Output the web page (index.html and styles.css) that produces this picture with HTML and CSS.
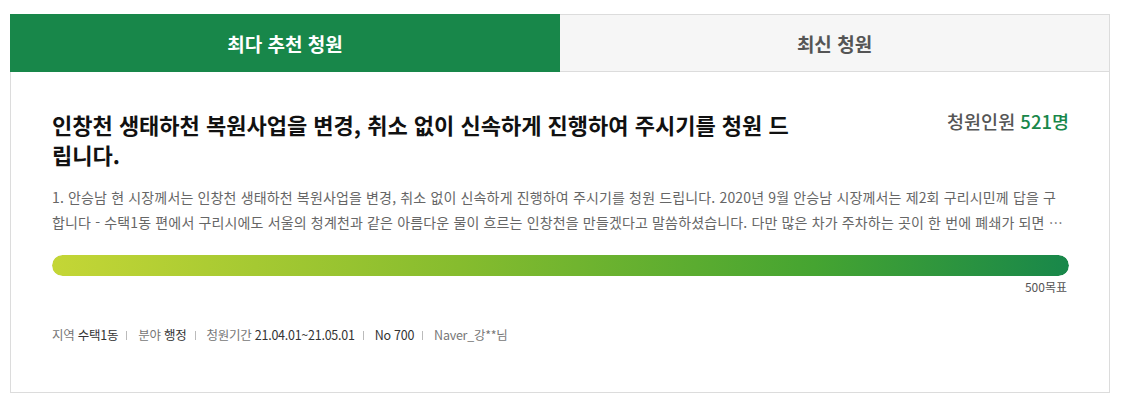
FILE: index.html
```html
<!DOCTYPE html>
<html lang="ko">
<head>
<meta charset="utf-8">
<link rel="stylesheet" href="styles.css">
</head>
<body>
<div class="board">
  <div class="tabs">
    <div class="tab active">최다 추천 청원</div>
    <div class="tab">최신 청원</div>
  </div>
  <div class="item">
    <div class="head">
      <h2 class="title">인창천 생태하천 복원사업을 변경, 취소 없이 신속하게 진행하여 주시기를 청원 드립니다.</h2>
      <div class="count">청원인원 <span class="num">521명</span></div>
    </div>
    <p class="desc">1. 안승남 현 시장께서는 인창천 생태하천 복원사업을 변경, 취소 없이 신속하게 진행하여 주시기를 청원 드립니다. 2020년 9월 안승남 시장께서는 제2회 구리시민께 답을 구합니다 - 수택1동 편에서 구리시에도 서울의 청계천과 같은 아름다운 물이 흐르는 인창천을 만들겠다고 말씀하셨습니다. 다만 많은 차가 주차하는 곳이 한 번에 폐쇄가 되면 주차 문제가 심각해질 수 있어 단계적으로 진행하겠다고 하셨습니다.</p>
    <div class="progress"><div class="bar" style="width:100%"></div></div>
    <div class="goal">500목표</div>
    <ul class="meta">
      <li><span class="lbl">지역</span> 수택1동</li>
      <li><span class="lbl">분야</span> 행정</li>
      <li><span class="lbl">청원기간</span> 21.04.01~21.05.01</li>
      <li>No 700</li>
      <li class="lbl">Naver_강**님</li>
    </ul>
  </div>
</div>
</body>
</html>
```
FILE: styles.css
```css
* { box-sizing: border-box; }
body {
  margin: 0;
  padding: 14px 0 0 10px;
  background: #fff;
  font-family: "Noto Sans CJK KR", "Noto Sans", sans-serif;
  color: #333;
}
.board {
  width: 1100px;
  height: 379px;
  border: 1px solid #dcdcdc;
  border-top: none;
  border-left: none;
  display: flex;
  flex-direction: column;
}
.tabs {
  display: flex;
  height: 58px;
}
.tab {
  flex: 1;
  display: flex;
  align-items: center;
  justify-content: center;
  font-size: 19px;
  font-weight: 700;
  color: #555;
  background: #f6f6f6;
  border-top: 1px solid #dcdcdc;
  border-bottom: 1px solid #dcdcdc;
}
.tab.active {
  flex: 0 0 550px;
  background: #18874a;
  color: #fff;
  border: none;
}
.item {
  flex: 1;
  border-left: 1px solid #dcdcdc;
  padding: 37px 40px 0 41px;
}
.head {
  display: flex;
  justify-content: space-between;
  align-items: flex-start;
}
.title {
  margin: 0;
  width: 755px;
  font-size: 22px;
  line-height: 30px;
  font-weight: 700;
  color: #111;
}
.count {
  font-size: 18.5px;
  line-height: 30px;
  color: #555;
  font-weight: 500;
  margin-top: -3px;
}
.count .num { color: #18874a; }
.desc {
  margin: 16px 0 0;
  font-size: 14px;
  line-height: 25px;
  color: #666;
  letter-spacing: 0.15px;
  height: 50px;
  overflow: hidden;
  display: -webkit-box;
  -webkit-line-clamp: 2;
  -webkit-box-orient: vertical;
}
.progress {
  margin-top: 20px;
  height: 21px;
  border-radius: 11px;
  overflow: hidden;
  background: #eee;
}
.bar {
  height: 100%;
  border-radius: 11px;
  background: linear-gradient(to right, #c4d636, #86bc2e 40%, #45a431 75%, #18874a);
}
.goal {
  text-align: right;
  font-size: 12px;
  line-height: 20px;
  color: #555;
  margin: 1px 2px 0 0;
}
.meta {
  list-style: none;
  margin: 28px 0 0;
  padding: 0;
  display: flex;
  font-size: 12.5px;
  line-height: 20px;
  letter-spacing: -0.25px;
  color: #333;
}
.meta li { white-space: nowrap; }
.meta li + li::before {
  content: "";
  display: inline-block;
  vertical-align: middle;
  width: 1px;
  height: 9px;
  background: #bbb;
  margin: 0 11px 2px 8px;
}
.lbl { color: #777; }
```
